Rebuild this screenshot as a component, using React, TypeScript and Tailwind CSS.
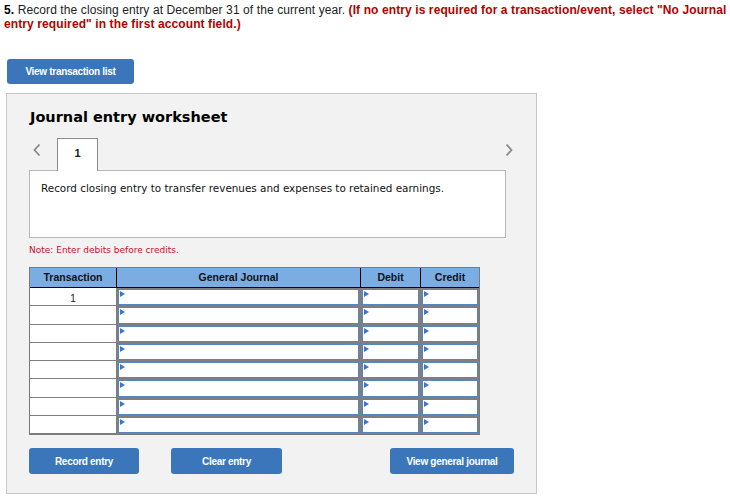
import React from 'react';

const rows = [1, 2, 3, 4, 5, 6, 7, 8];

function Marker() {
    return (
        <span className="absolute left-[1px] top-[1px] w-0 h-0 border-y-[3px] border-y-transparent border-l-[5px] border-l-[#3b77c4]" />
    );
}

function InputCell({ width, last }: { width: string; last?: boolean }) {
    return (
        <div className={`${width} h-full p-px bg-[#7f7f7f] ${last ? '' : 'pr-[2px]'}`}>
            <div className="relative h-full bg-white border border-[#5685bf]">
                <Marker />
            </div>
        </div>
    );
}

export default function App() {
    return (
        <div className="w-[730px] h-[500px] bg-white font-['Liberation_Sans',Arial,sans-serif] text-black overflow-hidden">
            <p className="px-[4px] pt-[4px] text-[12px] leading-[13.5px] tracking-[0.1px] text-[#222]">
                <span className="whitespace-nowrap">
                    <span className="font-bold text-black">5.</span> Record the closing entry at December 31 of the current year.{' '}
                    <span className="font-bold text-[#b30000]">
                        (If no entry is required for a transaction/event, select "No Journal
                    </span>
                </span>
                <br />
                <span className="font-bold text-[#b30000]">entry required" in the first account field.)</span>
            </p>

            <button className="ml-[7px] mt-[28px] w-[127px] h-[25px] rounded-[3px] bg-[#3b76ba] text-white text-[10px] font-bold tracking-[-0.3px]">
                View transaction list
            </button>

            <div className="ml-[6px] mt-[9px] w-[531px] h-[401px] border border-[#c8c8c8] bg-[#f2f2f2] pl-[22px] pr-[29px]">
                <h2 className="mt-[13px] ml-[1px] font-['DejaVu_Sans',Verdana,sans-serif] font-bold text-[14.5px] leading-[20px] text-black">
                    Journal entry worksheet
                </h2>

                <div className="mt-[11px] flex items-end h-[32px]">
                    <svg width="10" height="14" viewBox="0 0 10 14" className="ml-[3px] mb-[13px]">
                        <path d="M7.5 1.5 L2.5 7 L7.5 12.5" fill="none" stroke="#8a8a8a" strokeWidth="1.8" />
                    </svg>
                    <div className="ml-[15px] w-[41px] h-[33px] -mb-px z-10 bg-white border border-[#8a8a8a] border-b-0 flex justify-center pt-[6px] text-[11px] font-bold text-[#1a1a1a]">
                        1
                    </div>
                    <svg width="10" height="14" viewBox="0 0 10 14" className="ml-auto -mr-[7px] mb-[13px]">
                        <path d="M2.5 1.5 L7.5 7 L2.5 12.5" fill="none" stroke="#8a8a8a" strokeWidth="1.8" />
                    </svg>
                </div>

                <div className="w-[477px] h-[68px] bg-white border border-[#b8b8b8] px-[11px] pt-[10px] font-['DejaVu_Sans',Verdana,sans-serif] text-[10.4px] text-[#111]">
                    Record closing entry to transfer revenues and expenses to retained earnings.
                </div>

                <p className="mt-[6px] font-['DejaVu_Sans',Verdana,sans-serif] text-[9px] leading-[12px] text-[#c8102e]">
                    Note: Enter debits before credits.
                </p>

                <div className="mt-[11px] w-[451px] border border-[#7a7a7a] text-[10.5px]">
                    <div className="flex h-[20px] bg-[#7aade4] border-b border-black font-bold text-[#111]">
                        <div className="w-[87px] border-r border-black flex items-center justify-center">Transaction</div>
                        <div className="w-[244px] border-r border-black flex items-center justify-center">General Journal</div>
                        <div className="w-[60px] border-r border-black flex items-center justify-center">Debit</div>
                        <div className="flex-1 flex items-center justify-center">Credit</div>
                    </div>
                    {rows.map((r) => (
                        <div key={r} className="flex h-[18.3px]">
                            <div className="w-[87px] h-full bg-white border-r border-b border-[#7f7f7f] flex justify-center pt-[3px] text-[10px] text-[#222]">
                                {r === 1 ? '1' : ''}
                            </div>
                            <InputCell width="w-[244px]" />
                            <InputCell width="w-[60px]" />
                            <InputCell width="flex-1" last />
                        </div>
                    ))}
                </div>

                <div className="mt-[13px] flex items-center w-[485px]">
                    <button className="w-[110px] h-[26px] rounded-[3px] bg-[#3b76ba] text-white text-[10px] font-bold tracking-[-0.3px]">
                        Record entry
                    </button>
                    <button className="ml-[32px] w-[111px] h-[26px] rounded-[3px] bg-[#3b76ba] text-white text-[10px] font-bold tracking-[-0.3px]">
                        Clear entry
                    </button>
                    <button className="ml-auto w-[124px] h-[26px] rounded-[3px] bg-[#3b76ba] text-white text-[10px] font-bold tracking-[-0.3px]">
                        View general journal
                    </button>
                </div>
            </div>
        </div>
    );
}
